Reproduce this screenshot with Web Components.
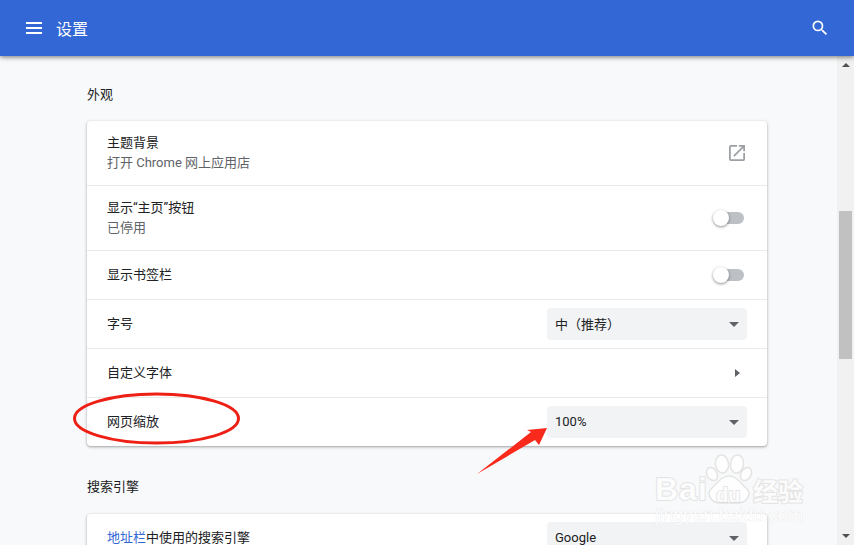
<!DOCTYPE html>
<html lang="zh">
<head>
<meta charset="utf-8">
<style>
  html, body { margin: 0; height: 100%; overflow: hidden; }
  body { font-family: Roboto, "Noto Sans CJK SC", sans-serif; background: #f8f9fa; }
</style>
</head>
<body>
<settings-page>
  <settings-section title="外观">
    <settings-row label="主题背景" sub="打开 Chrome 网上应用店" height="64"><link-icon></link-icon></settings-row>
    <settings-row label="显示“主页”按钮" sub="已停用" height="65"><toggle-switch></toggle-switch></settings-row>
    <settings-row label="显示书签栏" height="49"><toggle-switch></toggle-switch></settings-row>
    <settings-row label="字号" height="49"><select-box>中（推荐）</select-box></settings-row>
    <settings-row label="自定义字体" height="49"><sub-arrow></sub-arrow></settings-row>
    <settings-row label="网页缩放" height="49"><select-box>100%</select-box></settings-row>
  </settings-section>
  <settings-section title="搜索引擎">
    <settings-row height="48" link="地址栏" label="中使用的搜索引擎"><select-box>Google</select-box></settings-row>
  </settings-section>
</settings-page>
<page-notes></page-notes>
<script>
// 顶栏
class SettingsToolbar extends HTMLElement {
  constructor() {
    super();
    this.attachShadow({ mode: "open" });
    this.shadowRoot.innerHTML = `
    <style>
      :host { display: flex; align-items: center; height: 56px; background: #3367d6; color: #fff;
        box-shadow: 0 1px 5px rgba(0,0,0,.55); position: relative; z-index: 2; flex: none; }
      .menu { width: 18px; height: 12px; margin-left: 25px; display: block; }
      h1 { margin: 0 0 0 13px; font: 400 16px "Noto Sans CJK SC", sans-serif; flex: 1; }
      .search { width: 20px; height: 20px; margin-right: 24px; display: block; }
    </style>
    <svg class="menu" viewBox="0 0 18 12"><path fill="#fff" d="M1 0h16v2H1zM1 5h16v2H1zM1 10h16v2H1z"/></svg>
    <h1>设置</h1>
    <svg class="search" viewBox="0 0 24 24"><path fill="#fff" d="M15.5 14h-.79l-.28-.27A6.47 6.47 0 0 0 16 9.5 6.5 6.5 0 1 0 9.5 16c1.61 0 3.09-.59 4.23-1.57l.27.28v.79l5 4.99L20.49 19l-4.99-5zm-6 0C7.01 14 5 11.99 5 9.5S7.01 5 9.5 5 14 7.01 14 9.5 11.99 14 9.5 14z"/></svg>
    `;
  }
}
customElements.define("settings-toolbar", SettingsToolbar);

// 页面外壳：顶栏 + 内容 + 滚动条
class SettingsPage extends HTMLElement {
  constructor() {
    super();
    this.attachShadow({ mode: "open" });
    this.shadowRoot.innerHTML = `
    <style>
      :host { display: flex; flex-direction: column; height: 545px; overflow: hidden; }
      .body { display: flex; flex: 1; min-height: 0; }
      .content { flex: 1; min-width: 0; padding: 0 70px 0 87px; overflow: hidden; }
      .bar { width: 17px; flex: none; background: #f1f1f1; display: flex; flex-direction: column; align-items: center; justify-content: space-between; position: relative; }
      .up, .down { width: 0; height: 0; border-left: 4px solid transparent; border-right: 4px solid transparent; margin: 7px 0; }
      .up { border-bottom: 4px solid #505050; }
      .down { border-top: 4px solid #505050; }
      .thumb { position: absolute; left: 2px; right: 2px; top: 155px; height: 148px; background: #c1c1c1; }
    </style>
    <settings-toolbar></settings-toolbar>
    <div class="body">
      <div class="content"><slot></slot></div>
      <div class="bar"><div class="up"></div><div class="thumb"></div><div class="down"></div></div>
    </div>
    `;
  }
}
customElements.define("settings-page", SettingsPage);

// 分组：标题 + 卡片
class SettingsSection extends HTMLElement {
  constructor() {
    super();
    this.attachShadow({ mode: "open" });
    this.shadowRoot.innerHTML = `
    <style>
      :host { display: block; }
      h2 { margin: 0; height: 65px; padding-top: 28px; box-sizing: border-box; font: 400 13px/20px "Noto Sans CJK SC", sans-serif; color: #202124; }
      :host(:not(:first-child)) h2 { height: 68px; padding-top: 30px; }
      .card { background: #fff; border-radius: 4px; box-shadow: 0 1px 2px rgba(60,64,67,.3), 0 1px 3px 1px rgba(60,64,67,.15); }
    </style>
    <h2></h2>
    <div class="card"><slot></slot></div>
    `;
    this.shadowRoot.querySelector("h2").textContent = this.getAttribute("title");
  }
}
customElements.define("settings-section", SettingsSection);

// 一行设置
class SettingsRow extends HTMLElement {
  constructor() {
    super();
    this.attachShadow({ mode: "open" });
    this.shadowRoot.innerHTML = `
    <style>
      :host { display: flex; align-items: center; justify-content: space-between; box-sizing: border-box;
        padding: 0 20px; border-top: 1px solid #e9eaec; color: #202124; }
      :host(:first-child) { border-top: 0; }
      .label { font: 400 13px/20px Roboto, "Noto Sans CJK SC", sans-serif; }
      .label a { color: #3367d6; }
      .sub { font: 400 13px/20px Roboto, "Noto Sans CJK SC", sans-serif; color: #5f6368; }
    </style>
    <div class="text">
      <div class="label"><a></a><span></span></div>
      <div class="sub"></div>
    </div>
    <slot></slot>
    `;
    const s = this.shadowRoot;
    s.querySelector("a").textContent = this.getAttribute("link") || "";
    s.querySelector("span").textContent = this.getAttribute("label");
    const sub = s.querySelector(".sub");
    if (this.hasAttribute("sub")) sub.textContent = this.getAttribute("sub");
    else sub.remove();
    this.style.height = this.getAttribute("height") + "px";
  }
}
customElements.define("settings-row", SettingsRow);

class ToggleSwitch extends HTMLElement {
  constructor() {
    super();
    this.attachShadow({ mode: "open" });
    this.shadowRoot.innerHTML = `
    <style>
      :host { display: block; position: relative; width: 30px; height: 12px; background: #bdc1c6; border-radius: 6px; margin-right: 3px; }
      .knob { position: absolute; left: -1px; top: -2px; width: 16px; height: 16px; border-radius: 50%; background: #fff; box-shadow: 0 1px 3px rgba(0,0,0,.45); }
    </style>
    <div class="knob"></div>
    `;
  }
}
customElements.define("toggle-switch", ToggleSwitch);

class SelectBox extends HTMLElement {
  constructor() {
    super();
    this.attachShadow({ mode: "open" });
    this.shadowRoot.innerHTML = `
    <style>
      :host { display: flex; align-items: center; justify-content: space-between; box-sizing: border-box; width: 200px; height: 32px;
        padding: 0 8px; background: #f1f3f4; border-radius: 4px; font: 400 13px Roboto, "Noto Sans CJK SC", sans-serif; color: #202124;
        text-spacing-trim: space-all; }
      span { padding-bottom: 2px; }
      .arrow { width: 0; height: 0; border-left: 5px solid transparent; border-right: 5px solid transparent; border-top: 5px solid #5f6368; }
    </style>
    <span><slot></slot></span>
    <div class="arrow"></div>
    `;
  }
}
customElements.define("select-box", SelectBox);

class LinkIcon extends HTMLElement {
  constructor() {
    super();
    this.attachShadow({ mode: "open" });
    this.shadowRoot.innerHTML = `
    <style>:host { display: block; width: 16px; height: 16px; margin-right: 2px; } svg { display: block; }</style>
    <svg width="16" height="16" viewBox="3 3 18 18"><path fill="#9da1a6" d="M19 19H5V5h7V3H5a2 2 0 0 0-2 2v14a2 2 0 0 0 2 2h14c1.1 0 2-.9 2-2v-7h-2v7zM14 3v2h3.590l-9.830 9.830 1.410 1.410L19 6.410V10h2V3h-7z"/></svg>
    `;
  }
}
customElements.define("link-icon", LinkIcon);

class SubArrow extends HTMLElement {
  constructor() {
    super();
    this.attachShadow({ mode: "open" });
    this.shadowRoot.innerHTML = `
    <style>:host { display: block; width: 0; height: 0; border-top: 4px solid transparent; border-bottom: 4px solid transparent; border-left: 5px solid #5f6368; margin-right: 7px; }</style>
    `;
  }
}
customElements.define("sub-arrow", SubArrow);

// 截图上的标注和水印，浮在页面上面
class PageNotes extends HTMLElement {
  constructor() {
    super();
    this.attachShadow({ mode: "open" });
    this.shadowRoot.innerHTML = `
    <style>
      :host { position: absolute; inset: 0; display: block; pointer-events: none; z-index: 5; }
      svg { position: absolute; left: 0; top: 0; }
      .mark { position: absolute; font-family: "Liberation Sans", sans-serif; color: rgba(255,255,255,.85);
        -webkit-text-stroke: 2px rgba(215,215,215,.6); paint-order: stroke fill; white-space: nowrap; }
      .bai { left: 655px; top: 469px; font-size: 32px; font-weight: 700; line-height: 40px; letter-spacing: 1px; }
      .du { left: 716px; top: 485px; font-size: 20px; font-weight: 700; line-height: 20px; }
      .cn { left: 753px; top: 475px; font: 700 25px/30px "Noto Sans CJK SC", sans-serif; }
      .jy { left: 655px; top: 506px; font-size: 18px; line-height: 18px; letter-spacing: .2px; -webkit-text-stroke-width: .6px; }
    </style>
    <svg width="854" height="545" viewBox="0 0 854 545">
      <ellipse cx="156.500" cy="418.500" rx="82" ry="24.500" fill="none" stroke="#ee2015" stroke-width="3"/>
      <path fill="#f92a1c" d="M477 474 L531 432 L527 430 L547 428 L539 445 L535 440 Z"/>
      <g fill="rgba(255,255,255,.85)" stroke="rgba(215,215,215,.65)" stroke-width="1.500">
        <ellipse cx="722" cy="464" rx="6.500" ry="9" transform="rotate(-8 722 464)"/>
        <ellipse cx="737" cy="464" rx="6.500" ry="9" transform="rotate(8 737 464)"/>
        <ellipse cx="712" cy="474" rx="5" ry="7" transform="rotate(-30 712 474)"/>
        <ellipse cx="746" cy="474" rx="5" ry="7" transform="rotate(30 746 474)"/>
        <path d="M729 476 C737 476 741 484 747 489 C752 495 746 503 738 503 C732 503 726 503 720 503 C712 503 706 495 711 489 C717 484 721 476 729 476 Z"/>
      </g>
    </svg>
    <div class="mark bai">Bai</div>
    <div class="mark du">du</div>
    <div class="mark cn">经验</div>
    <div class="mark jy">jingyan.baidu.com</div>
    `;
  }
}
customElements.define("page-notes", PageNotes);
</script>
</body>
</html>
